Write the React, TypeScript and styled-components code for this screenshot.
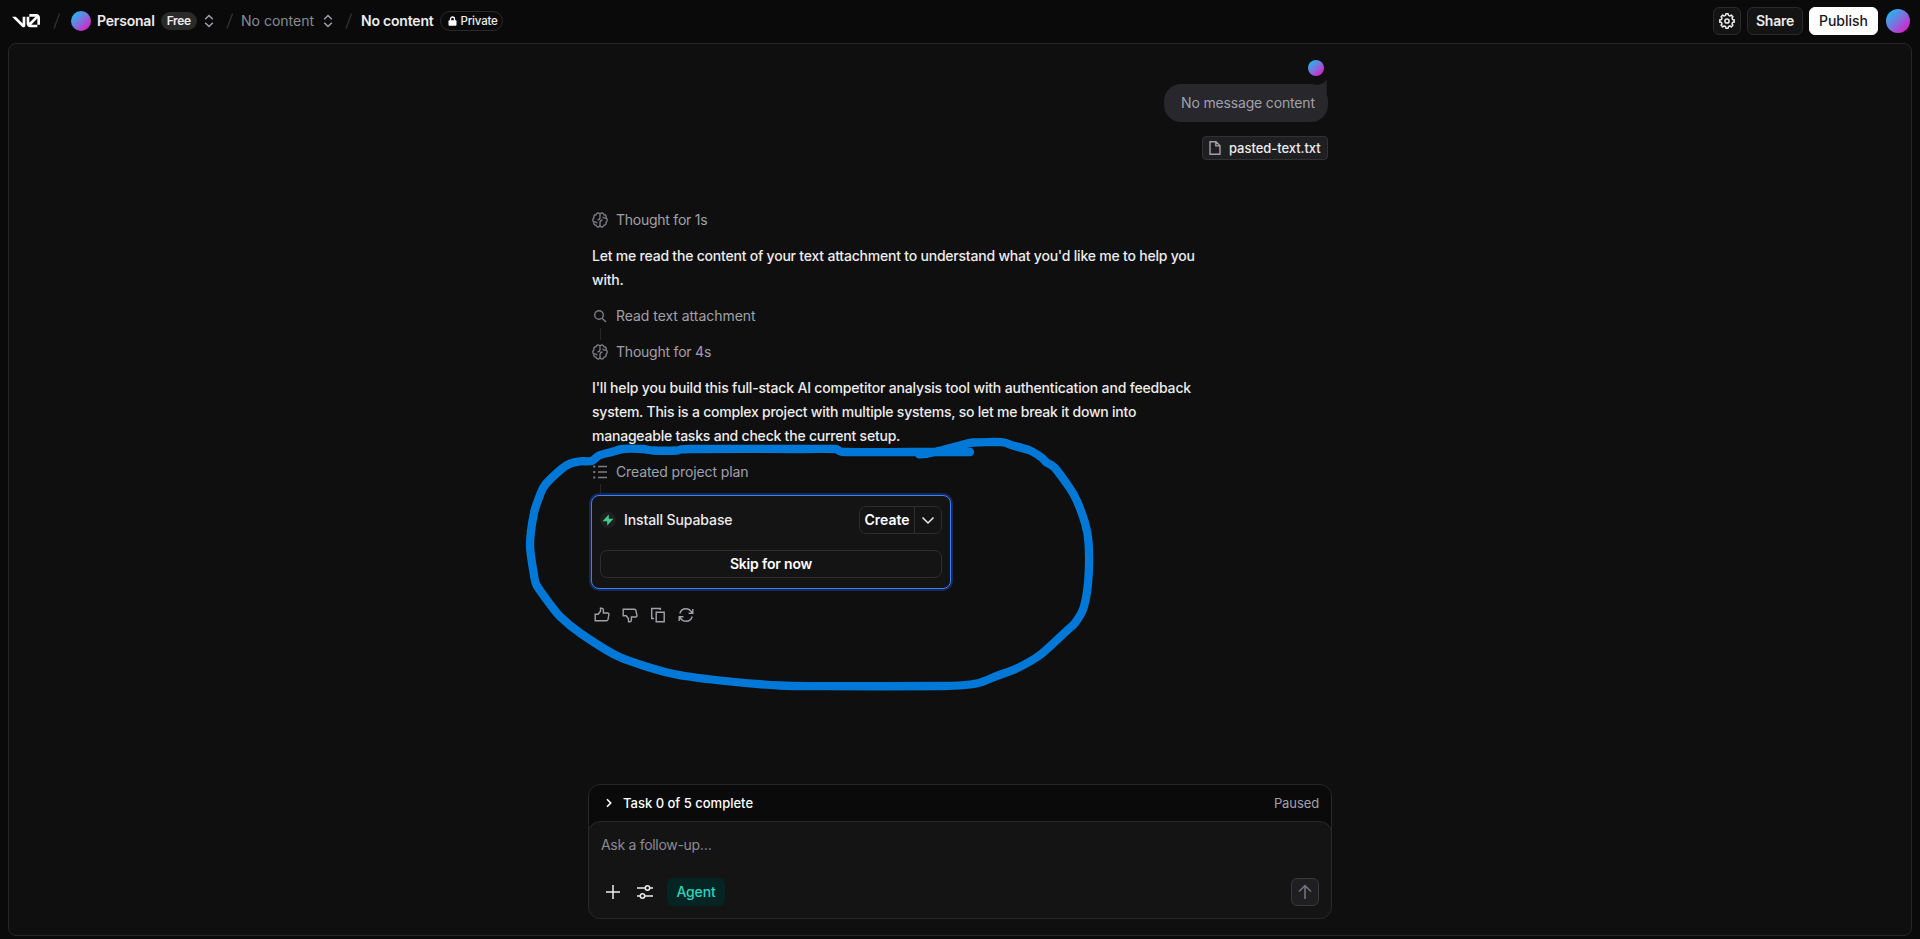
import React from "react";
import styled, { createGlobalStyle } from "styled-components";

const Global = createGlobalStyle`
  *, *::before, *::after { box-sizing: border-box; }
  html, body, #root { height: 100%; }
  body {
    margin: 0;
    overflow: hidden;
    background: #0a0a0a;
    color: #ededed;
    font-family: Inter, "Liberation Sans", sans-serif;
    font-size: 14px;
    line-height: 20px;
  }
  button { font: inherit; color: inherit; margin: 0; padding: 0; }
`;

const Label = styled.span<{ $weight?: number; $size?: number; $track?: number; $color?: string }>`
  font-weight: ${(p) => p.$weight ?? 400};
  font-size: ${(p) => p.$size ?? 14}px;
  letter-spacing: ${(p) => p.$track ?? 0}px;
  color: ${(p) => p.$color ?? "#ededed"};
  white-space: nowrap;
`;

const Page = styled.div`
  height: 939px;
  display: flex;
  flex-direction: column;
  padding: 0 8px 3px;
`;

const Header = styled.header`
  height: 43px;
  flex: none;
  display: flex;
  align-items: center;
  justify-content: space-between;
  padding: 0 2px 1px 4px;
`;

const Group = styled.div<{ $gap?: number }>`
  display: flex;
  align-items: center;
  gap: ${(p) => p.$gap ?? 0}px;
`;

const Crumb = styled.div<{ $width: number }>`
  display: flex;
  align-items: center;
  width: ${(p) => p.$width}px;
  gap: 6px;

  > svg {
    margin-left: auto;
  }
`;

const SlashCell = styled.span<{ $width: number; $inset: number }>`
  display: flex;
  width: ${(p) => p.$width}px;
  padding-left: ${(p) => p.$inset}px;
`;

const Avatar = styled.span<{ $size: number }>`
  width: ${(p) => p.$size}px;
  height: ${(p) => p.$size}px;
  flex: none;
  border-radius: 50%;
  background: linear-gradient(135deg, #12c2f2 5%, #7d72dc 50%, #f00cc6 95%);
`;

const FreePill = styled.span`
  height: 18px;
  width: 36px;
  display: flex;
  align-items: center;
  justify-content: center;
  border-radius: 9px;
  background: #2a2a2a;
`;

const PrivatePill = styled.span`
  height: 20px;
  width: 63px;
  display: flex;
  align-items: center;
  padding-left: 7px;
  gap: 4px;
  border: 1px solid #2a2a2c;
  border-radius: 10px;
`;

const HeaderButton = styled.button<{ $width: number; $solid?: boolean }>`
  width: ${(p) => p.$width}px;
  height: 28px;
  display: flex;
  align-items: center;
  justify-content: center;
  border-radius: 6px;
  border: 1px solid ${(p) => (p.$solid ? "#fff" : "#2a2a2c")};
  background: ${(p) => (p.$solid ? "#fff" : "#141414")};
`;

const ProfileSlot = styled.div`
  display: flex;
  padding-left: 2px;
`;

const Panel = styled.main`
  flex: 1;
  width: 1904px;
  display: flex;
  flex-direction: column;
  align-items: center;
  justify-content: space-between;
  border: 1px solid #27272a;
  border-radius: 8px;
  background: #0f0f0f;
  padding: 16px 0;
`;

const Thread = styled.section`
  width: 736px;
  display: flex;
  flex-direction: column;
`;

const UserTurn = styled.div`
  display: flex;
  flex-direction: column;
  align-items: flex-end;
`;

const AvatarRow = styled.div`
  display: flex;
  padding-right: 4px;
  margin-bottom: 8px;
`;

const Bubble = styled.div`
  position: relative;
  width: 164px;
  height: 38px;
  display: flex;
  align-items: center;
  padding: 0 0 0 17px;
  border-radius: 17px;
  background: #27272c;
`;

const Tail = styled.svg`
  position: absolute;
  right: 0;
  top: -5px;
`;

const FileChip = styled.div`
  margin-top: 14px;
  width: 126px;
  height: 24px;
  display: flex;
  align-items: center;
  padding: 0 0 1px 4px;
  gap: 6px;
  border: 1px solid #323235;
  border-radius: 4px;
  background: #1f1f22;
`;

const Steps = styled.div`
  margin-top: 50px;
  display: flex;
  flex-direction: column;
`;

const Step = styled.div`
  height: 20px;
  display: flex;
  align-items: center;
  gap: 8px;
  color: #7c7c84;
`;

const Connector = styled.div<{ $h: number }>`
  width: 1px;
  height: ${(p) => p.$h}px;
  margin: 2px 0 2px 8px;
  background: #27272a;
`;

const Prose = styled.p`
  margin: 14px 0;
  display: flex;
  flex-direction: column;
  line-height: 24px;
`;

const Card = styled.div`
  width: 360px;
  height: 94px;
  margin-left: -1px;
  border: 1px solid #3b82f6;
  border-radius: 8px;
  box-shadow: 0 0 0 2px #17275a;
  background: #141414;
  padding: 10px 8px;
  display: flex;
  flex-direction: column;
  justify-content: space-between;
`;

const CardRow = styled.div`
  display: flex;
  align-items: center;
  justify-content: space-between;
`;

const Badge = styled.span`
  width: 16px;
  height: 16px;
  display: flex;
  align-items: center;
  justify-content: center;
  border-radius: 50%;
  background: #1f1f1f;
`;

const SplitButton = styled.div`
  width: 83px;
  height: 28px;
  display: flex;
  border: 1px solid #2d2d30;
  border-radius: 7px;
`;

const SplitMain = styled.button`
  width: 55px;
  border: 0;
  border-right: 1px solid #2d2d30;
  background: none;
`;

const SplitMenu = styled.button`
  flex: 1;
  display: flex;
  align-items: center;
  justify-content: center;
  border: 0;
  background: none;
`;

const SkipButton = styled.button`
  height: 28px;
  border: 1px solid #2d2d30;
  border-radius: 7px;
  background: none;
`;

const Actions = styled.div`
  display: flex;
  gap: 12px;
  margin-top: 18px;
  padding-left: 2px;
  color: #a1a1aa;
`;

const Composer = styled.section`
  width: 744px;
  border: 1px solid #27272a;
  border-radius: 12px;
  background: #0a0a0a;
`;

const TaskBar = styled.div`
  height: 36px;
  display: flex;
  align-items: center;
  justify-content: space-between;
  padding: 0 12px 0 16px;
`;

const InputBox = styled.div`
  height: 98px;
  margin: 0 -1px -1px;
  display: flex;
  flex-direction: column;
  justify-content: space-between;
  border: 1px solid #27272a;
  border-radius: 12px;
  background: #141414;
  padding: 13px 12px 12px;
`;

const Tool = styled.span`
  display: flex;
  padding-left: 4px;
`;

const ModeButton = styled.button`
  width: 58px;
  height: 28px;
  margin-left: -2px;
  border: 0;
  border-radius: 6px;
  background: #042524;
`;

const SendButton = styled.button`
  width: 28px;
  height: 28px;
  display: flex;
  align-items: center;
  justify-content: center;
  border: 1px solid #38383b;
  border-radius: 6px;
  background: #1f1f22;
  color: #71717a;
`;

const Marker = styled.svg`
  position: absolute;
  left: 0;
  top: 0;
  pointer-events: none;
`;

const Icon = ({ children, size = 16, w = 1.4, color = "currentColor" }: {
  children: React.ReactNode; size?: number; w?: number; color?: string;
}) => (
  <svg width={size} height={size} viewBox="0 0 16 16" fill="none" stroke={color} strokeWidth={w}>
    {children}
  </svg>
);

const Slash = ({ width, inset }: { width: number; inset: number }) => (
  <SlashCell $width={width} $inset={inset}>
    <svg width="8" height="16" viewBox="0 0 8 16" fill="none" stroke="#2e2e31" strokeWidth="1.5">
      <path d="M6.6 .5L1 15.5" />
    </svg>
  </SlashCell>
);

const UpDown = () => (
  <svg width="10" height="14" viewBox="0 0 10 14" fill="none" stroke="#a1a1aa" strokeWidth="1.5">
    <path d="M1.2 5.2L5 1.5l3.8 3.7M1.2 8.8L5 12.5l3.8-3.7" />
  </svg>
);

const Brain = () => (
  <Icon w={1.35}>
    <path d="M8 2.2C7.2.5 4.5.5 4 2.8 2 2.7 1.3 4.6 2 5.8.3 6.8.3 9.2 2 10.2 1.3 11.6 2.2 13.2 4 13.2 4.6 15.5 7.2 15.5 8 13.8 8.8 15.5 11.4 15.5 12 13.2 13.8 13.2 14.7 11.6 14 10.2 15.7 9.2 15.7 6.8 14 5.8 14.7 4.6 14 2.7 12 2.8 11.5.5 8.8.5 8 2.2" />
    <path d="M8 2.2v3.3c0 1.5-.9 2.3-2.5 2.5M8 13.8v-3.300c0-1.500.9-2.300 2.500-2.500M2 10.200c1.400-.6 2.800-.2 3.200 1.200M14 5.800c-1.400.6-2.800.2-3.200-1.200" />
  </Icon>
);

const gearPath = (() => {
  const pts: string[] = [];
  for (let i = 0; i < 8; i++) {
    const at = (deg: number, r: number) => {
      const a = ((i * 45 + deg) * Math.PI) / 180;
      return `${(8 + r * Math.sin(a)).toFixed(2)} ${(8 - r * Math.cos(a)).toFixed(2)}`;
    };
    pts.push(`${at(-9, 7.3)}L${at(9, 7.3)}L${at(13, 6)}Q${at(22.5, 5.3)} ${at(32, 6)}`);
  }
  return `M${pts.join("L")}Z`;
})();

const thumb = "M1.2 7.2h3l2.3-3V1.2h1.2c1 0 1.7.8 1.7 1.8v3h4.2c.9 0 1.5.8 1.3 1.7l-.9 4.700c-.2.9-.8 1.400-1.700 1.400H1.200z";

const strokePoints: [number, number][] = [
  [970, 452], [910, 452], [845, 452], [835, 449], [800, 449], [690, 449], [677, 450.5], [653, 450.5],
  [643, 449], [623, 449], [610, 452.5], [599, 455.5], [591.5, 461], [580, 461.3], [570, 463.7],
  [561.5, 469], [545, 485], [540, 495], [534, 513], [530, 545], [534, 575], [536.5, 585], [548, 601.5],
  [560, 616.5], [581.5, 634], [620, 657.3], [671.5, 673.5], [720, 680.5], [780, 685.5], [820, 686.2],
  [943, 686], [976.5, 683.5], [996.5, 676], [1016.5, 668.5], [1040, 655], [1066.5, 631], [1075, 623],
  [1083.5, 608], [1088.3, 580], [1088.6, 543], [1085, 523], [1074, 495], [1055, 468], [1046.5, 462.5],
  [1041.5, 457.5], [1030, 450.5], [1013, 445.5], [1001.5, 442.2], [973, 442.5], [960, 445.5],
  [943, 450], [926.5, 453.8], [919, 454.3],
];

// Catmull-Rom spline through the freehand points.
const markerPath = strokePoints.reduce((d, p, i, all) => {
  if (i === 0) return `M${p[0]} ${p[1]}`;
  const a = all[i - 1];
  const before = all[i - 2] ?? a;
  const after = all[i + 1] ?? p;
  const k = 8;
  const c1 = [a[0] + (p[0] - before[0]) / k, a[1] + (p[1] - before[1]) / k];
  const c2 = [p[0] - (after[0] - a[0]) / k, p[1] - (after[1] - a[1]) / k];
  return `${d}C${c1[0]} ${c1[1]} ${c2[0]} ${c2[1]} ${p[0]} ${p[1]}`;
}, "");

const muted = "#a1a1aa";

export default function App() {
  return (
    <Page>
      <Global />
      <Header>
        <Group>
          <svg width="28" height="13.4" viewBox="0 0 147 70" fill="#fff">
            <path d="M56 50.2031V14H70V60.1562C70 65.5928 65.5928 70 60.1562 70C57.5605 70 54.9982 68.9992 53.1562 67.1573L0 14H19.7969L56 50.2031Z" />
            <path d="M147 56H133V23.9531L100.953 56H133V70H96.6875C85.8144 70 77 61.1856 77 50.3125V14H91V46.1562L123.156 14H91V0H127.312C138.186 0 147 8.81439 147 19.6875V56Z" />
          </svg>
          <Slash width={31} inset={13} />
          <Crumb $width={143}>
            <Avatar $size={20} />
            <Label $weight={600} $track={-0.2}>Personal</Label>
            <FreePill><Label $weight={600} $size={12} $track={-0.4}>Free</Label></FreePill>
            <UpDown />
          </Crumb>
          <Slash width={27} inset={12} />
          <Crumb $width={92}>
            <Label $color="#8b8b93">No content</Label>
            <UpDown />
          </Crumb>
          <Slash width={28} inset={12} />
          <Group $gap={6}>
            <Label $weight={600} $track={-0.2}>No content</Label>
            <PrivatePill>
              <svg width="9" height="10" viewBox="0 0 9 10">
                <path d="M2.5 5V3a2 2 0 0 1 4 0v2" fill="none" stroke="#fff" strokeWidth="1.3" />
                <rect x=".5" y="4.2" width="8" height="5.5" rx="1" fill="#fff" />
              </svg>
              <Label $weight={500} $size={11.5} $track={-0.2}>Private</Label>
            </PrivatePill>
          </Group>
        </Group>
        <Group $gap={6}>
          <HeaderButton $width={28}>
            <Icon color="#ededed" w={1.5}>
              <path d={gearPath} strokeLinejoin="round" />
              <circle cx="8" cy="8" r="2.1" />
            </Icon>
          </HeaderButton>
          <HeaderButton $width={56}><Label $weight={600} $track={-0.2}>Share</Label></HeaderButton>
          <HeaderButton $width={69} $solid><Label $weight={500} $color="#171717">Publish</Label></HeaderButton>
          <ProfileSlot><Avatar $size={24} /></ProfileSlot>
        </Group>
      </Header>

      <Panel>
        <Thread>
          <UserTurn>
            <AvatarRow><Avatar $size={16} /></AvatarRow>
            <Bubble>
              <Tail width="14" height="20" viewBox="0 0 14 20">
                <path d="M12.8 0V20L0 6C6 6 11 4 12.8 0Z" fill="#27272c" />
              </Tail>
              <Label $color={muted} $track={-0.16}>No message content</Label>
            </Bubble>
            <FileChip>
              <Icon color={muted}>
                <path d="M3 1.7h6l4 4v8.6H3zM8.8 1.7v4.2H13" />
              </Icon>
              <Label $weight={500} $size={13} $track={-0.05}>pasted-text.txt</Label>
            </FileChip>
          </UserTurn>

          <Steps>
            <Step><Brain /><Label $color={muted} $track={-0.25}>Thought for 1s</Label></Step>
            <Prose>
              <Label $weight={500} $track={-0.21}>Let me read the content of your text attachment to understand what you'd like me to help you</Label>
              <Label $weight={500} $track={-0.2}>with.</Label>
            </Prose>
            <Step>
              <Icon><circle cx="7" cy="7" r="4.3" /><path d="M10.2 10.2l3.8 3.8" /></Icon>
              <Label $color={muted} $track={-0.04}>Read text attachment</Label>
            </Step>
            <Connector $h={12} />
            <Step><Brain /><Label $color={muted} $track={-0.22}>Thought for 4s</Label></Step>
            <Prose>
              <Label $weight={500} $track={-0.175}>I'll help you build this full-stack AI competitor analysis tool with authentication and feedback</Label>
              <Label $weight={500} $track={-0.22}>system. This is a complex project with multiple systems, so let me break it down into</Label>
              <Label $weight={500} $track={-0.215}>manageable tasks and check the current setup.</Label>
            </Prose>
            <Step>
              <Icon w={1.4}>
                <path d="M6 2.5h9M6 8h9M6 13.5h9" />
                <path d="M1.2 2.5h2M1.2 8h2M1.2 13.5h2" strokeWidth="2" />
              </Icon>
              <Label $color={muted} $track={-0.12}>Created project plan</Label>
            </Step>
            <Connector $h={9} />
            <Card>
              <CardRow>
                <Group $gap={8}>
                  <Badge>
                    <svg width="12" height="12" viewBox="0 0 12 12" fill="#3ecf8e">
                      <path d="M6.8.5v4.3h4.7L5.2 11.5V7.2H.5z" />
                    </svg>
                  </Badge>
                  <Label $weight={500} $track={-0.1}>Install Supabase</Label>
                </Group>
                <SplitButton>
                  <SplitMain><Label $weight={600} $color="#fff">Create</Label></SplitMain>
                  <SplitMenu><Icon color="#ededed" w={1.5}><path d="M2.5 5.5L8 11l5.5-5.5" /></Icon></SplitMenu>
                </SplitButton>
              </CardRow>
              <SkipButton><Label $weight={600} $color="#fff" $track={-0.18}>Skip for now</Label></SkipButton>
            </Card>
            <Actions>
              <Icon><path d={thumb} /></Icon>
              <Icon><path d={thumb} transform="translate(0 16) scale(1 -1)" /></Icon>
              <Icon><path d="M4 11.5H1.7V1.5h8.6V3M6.2 5.2h8v9.5h-8z" /></Icon>
              <Icon>
                <path d="M1.8 6.5C2.6 3.7 5 1.7 8 1.7c2.7 0 4.6 1.5 6.2 4M14.8 2v4.2h-4.2M14.2 9.5c-.8 2.8-3.2 4.8-6.2 4.8-2.7 0-4.6-1.5-6.2-4M1.2 14V9.8h4.2" />
              </Icon>
            </Actions>
          </Steps>
        </Thread>

        <Composer>
          <TaskBar>
            <Group $gap={10}>
              <svg width="8" height="10" viewBox="0 0 8 10" fill="none" stroke="#fff" strokeWidth="1.6">
                <path d="M2 1.3L5.7 5 2 8.7" />
              </svg>
              <Label $weight={500} $size={13} $color="#fff">Task 0 of 5 complete</Label>
            </Group>
            <Label $size={13} $color={muted} $track={-0.1}>Paused</Label>
          </TaskBar>
          <InputBox>
            <Label $color="#8b8b93" $track={-0.3}>Ask a follow-up…</Label>
            <CardRow>
              <Group $gap={16}>
                <Tool><Icon color="#ededed" w={1.5}><path d="M8 1v14M1 8h14" /></Icon></Tool>
                <Icon color="#ededed" w={1.5}>
                  <path d="M0 4h8.5M12.5 4H16M0 12h3M7.5 12H16" />
                  <circle cx="10.5" cy="4" r="2.2" /><circle cx="5.5" cy="12" r="2.2" />
                </Icon>
                <ModeButton><Label $weight={500} $color="#2dd4bf" $track={-0.15}>Agent</Label></ModeButton>
              </Group>
              <SendButton><Icon w={1.6}><path d="M8 15V2M2 7.5L8 1.7l6 5.8" /></Icon></SendButton>
            </CardRow>
          </InputBox>
        </Composer>
      </Panel>

      <Marker width="1920" height="939" viewBox="0 0 1920 939" fill="none" stroke="#0078d7" strokeWidth="8.3" strokeLinejoin="round" strokeLinecap="round">
        <path d={markerPath} />
      </Marker>
    </Page>
  );
}
